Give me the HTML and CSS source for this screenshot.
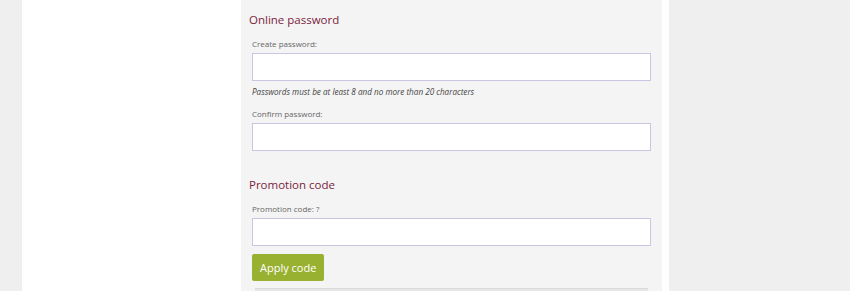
FILE: index.html
```html
<!DOCTYPE html>
<html lang="en">
<head>
<meta charset="utf-8">
<title>Online password</title>
<link rel="stylesheet" href="styles.css">
</head>
<body>
<div class="page">
  <div class="edge-left"></div>
  <div class="col-blank"></div>
  <main class="panel">
    <section class="group">
      <h2 class="group-title">Online password</h2>
      <div class="field">
        <label class="field-label" for="pw1">Create password:</label>
        <input class="field-input" id="pw1" type="password">
        <p class="field-hint">Passwords must be at least 8 and no more than 20 characters</p>
      </div>
      <div class="field">
        <label class="field-label" for="pw2">Confirm password:</label>
        <input class="field-input" id="pw2" type="password">
      </div>
    </section>
    <section class="group group-promo">
      <h2 class="group-title">Promotion code</h2>
      <div class="field">
        <label class="field-label" for="promo">Promotion code: ?</label>
        <input class="field-input" id="promo" type="text">
      </div>
      <button class="btn-apply" type="button">Apply code</button>
      <div class="next-box"></div>
    </section>
  </main>
  <div class="col-gap"></div>
  <div class="edge-right"></div>
</div>
</body>
</html>
```

FILE: styles.css
```css
html, body {
  margin: 0;
  padding: 0;
  background: #ffffff;
  height: 100%;
}

body {
  font-family: "Open Sans", "Liberation Sans", sans-serif;
  overflow: hidden;
}

.page {
  display: flex;
  height: 291px;
  width: 850px;
}

.edge-left {
  width: 22px;
  background: #efefef;
  flex: none;
}

.col-blank {
  width: 219px;
  background: #ffffff;
  flex: none;
}

.panel {
  width: 421px;
  flex: none;
  background: #f4f4f4;
  box-sizing: border-box;
  padding: 12px 11px 0 8px;
}

.col-gap {
  width: 7px;
  flex: none;
  background: #ffffff;
}

.edge-right {
  flex: 1;
  background: #efefef;
}

.group-title {
  margin: 0 0 10px 0;
  font-size: 11.5px;
  line-height: 16px;
  font-weight: 400;
  color: #7b1d3c;
}

.group-promo {
  margin-top: 26px;
}

.field {
  margin-left: 3px;
  display: flex;
  flex-direction: column;
}

.field + .field {
  margin-top: 10px;
}

.field-label {
  font-size: 8px;
  line-height: 12px;
  color: #666666;
  margin-bottom: 3px;
}

.field-input {
  box-sizing: border-box;
  width: 399px;
  height: 28px;
  margin: 0;
  border: 1px solid #c9c6e2;
  background: #ffffff;
  border-radius: 0;
  outline: none;
  padding: 0 6px;
}

.field-hint {
  margin: 5px 0 0 0;
  font-size: 8.15px;
  line-height: 12px;
  font-style: italic;
  color: #444444;
}

.btn-apply {
  display: block;
  margin: 8px 0 0 3px;
  padding: 6px 8px;
  border: none;
  border-radius: 2px;
  background: #99b130;
  color: #ffffff;
  font-family: "Open Sans", "Liberation Sans", sans-serif;
  font-size: 11px;
  line-height: 15px;
  cursor: pointer;
}

.next-box {
  margin: 7px 3px 0 6px;
  height: 12px;
  background: #e6e6e6;
  border-top: 1px solid #d9d9d9;
}
```
